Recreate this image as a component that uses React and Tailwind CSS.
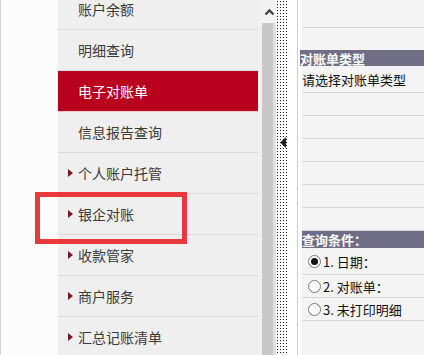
import React from "react";

const items = [
  { t: "账户余额", m: false },
  { t: "明细查询", m: false },
  { t: "电子对账单", m: false, sel: true },
  { t: "信息报告查询", m: false },
  { t: "个人账户托管", m: true },
  { t: "银企对账", m: true },
  { t: "收款管家", m: true },
  { t: "商户服务", m: true },
  { t: "汇总记账清单", m: true },
];

function Marker() {
  return (
    <svg width="5" height="8" viewBox="0 0 5 8" className="block">
      <polygon points="0,0 5,4 0,8" fill="#7a1426" />
    </svg>
  );
}

function Radio({ on }) {
  return (
    <span className="w-[13px] h-[13px] rounded-full border border-[#777] bg-white flex items-center justify-center shrink-0">
      {on && <span className="w-[7px] h-[7px] rounded-full bg-[#111]" />}
    </span>
  );
}

export default function App() {
  const font = { fontFamily: '"Noto Sans CJK SC", "Noto Sans", sans-serif' };
  return (
    <div
      className="relative w-[424px] h-[355px] overflow-hidden bg-white flex"
      style={font}
    >
      {/* left white strip */}
      <div className="w-[58px] h-full shrink-0 bg-[#fbfbfb] border-l border-[#d4d4d4]" />

      {/* menu */}
      <div className="w-[200px] h-full shrink-0 bg-[#efefef] overflow-hidden">
        <div className="-mt-[11px] flex flex-col">
          {items.map((it, i) => (
            <div
              key={i}
              className={
                "h-[41px] flex items-center pl-[10px] border-b text-[14px] leading-none " +
                (it.sel
                  ? "bg-[#b9001f] text-white border-[#f2c9cf]"
                  : "text-[#3a3a3a] border-[#dadada]")
              }
            >
              <span className="w-[10px] flex items-center">
                {it.m && <Marker />}
              </span>
              <span>{it.t}</span>
            </div>
          ))}
        </div>
      </div>

      {/* gap */}
      <div className="w-[4px] h-full shrink-0 bg-[#f1f1f1]" />

      {/* scrollbar */}
      <div className="w-[14px] h-full shrink-0 flex flex-col">
        <div className="h-[23px] bg-[#f3f3f3] flex items-center justify-center">
          <svg width="11" height="8" viewBox="0 0 11 8">
            <polyline
              points="1.5,6.5 5.5,2.5 9.5,6.5"
              fill="none"
              stroke="#444"
              strokeWidth="2.4"
            />
          </svg>
        </div>
        <div className="flex-1 flex">
          <div className="w-[11px] bg-[#c8c8c8]" />
          <div className="w-[3px] bg-[#dedede]" />
        </div>
      </div>

      {/* dotted splitter */}
      <div className="w-[12px] h-full shrink-0 bg-white bg-[radial-gradient(circle,#111_0.8px,transparent_1px)] bg-[length:3px_3px] flex flex-col">
        <div className="h-[137px]" />
        <div className="flex justify-center pl-[2px]">
          <svg width="6" height="11" viewBox="0 0 6 11">
            <polygon points="6,0 0,5.5 6,11" fill="#222" />
          </svg>
        </div>
      </div>

      {/* white gap with border */}
      <div className="w-[10px] h-full shrink-0 bg-white border-r border-[#cfcfcf]" />
      <div className="w-[4px] h-full shrink-0 bg-white" />

      {/* right panel */}
      <div className="flex-1 h-full bg-[#f4f4f4] flex flex-col text-[13px] leading-none text-[#111]">
        <div className="h-[28px] border-b border-[#d6d6d6] shrink-0" />
        <div className="h-[22px] shrink-0" />
        <div className="h-[16px] bg-[#6f6e86] text-white font-bold flex items-center -ml-[2px] shrink-0 whitespace-nowrap">
          对账单类型
        </div>
        <div className="h-[27px] border-b border-[#d6d6d6] flex items-center shrink-0 whitespace-nowrap">
          请选择对账单类型
        </div>
        {[0, 1, 2, 3, 4, 5].map((i) => (
          <div key={i} className="h-[23px] border-b border-[#d6d6d6] shrink-0" />
        ))}
        <div className="h-[17px] bg-[#6f6e86] text-white font-bold flex items-center shrink-0 whitespace-nowrap">
          查询条件：
        </div>
        <div className="h-[27px] border-b border-[#d6d6d6] flex items-center gap-[2px] pl-[6px] shrink-0 whitespace-nowrap">
          <Radio on />
          <span>1. 日期：</span>
        </div>
        <div className="h-[23px] border-b border-[#d6d6d6] flex items-center gap-[2px] pl-[6px] shrink-0 whitespace-nowrap">
          <Radio />
          <span>2. 对账单：</span>
        </div>
        <div className="h-[23px] border-b border-[#d6d6d6] flex items-center gap-[2px] pl-[6px] shrink-0 whitespace-nowrap">
          <Radio />
          <span>3. 未打印明细</span>
        </div>
      </div>

      {/* annotation box */}
      <div className="absolute left-[35px] top-[192px] w-[152px] h-[52px] border-[5px] border-[#e8393c]" />
    </div>
  );
}
